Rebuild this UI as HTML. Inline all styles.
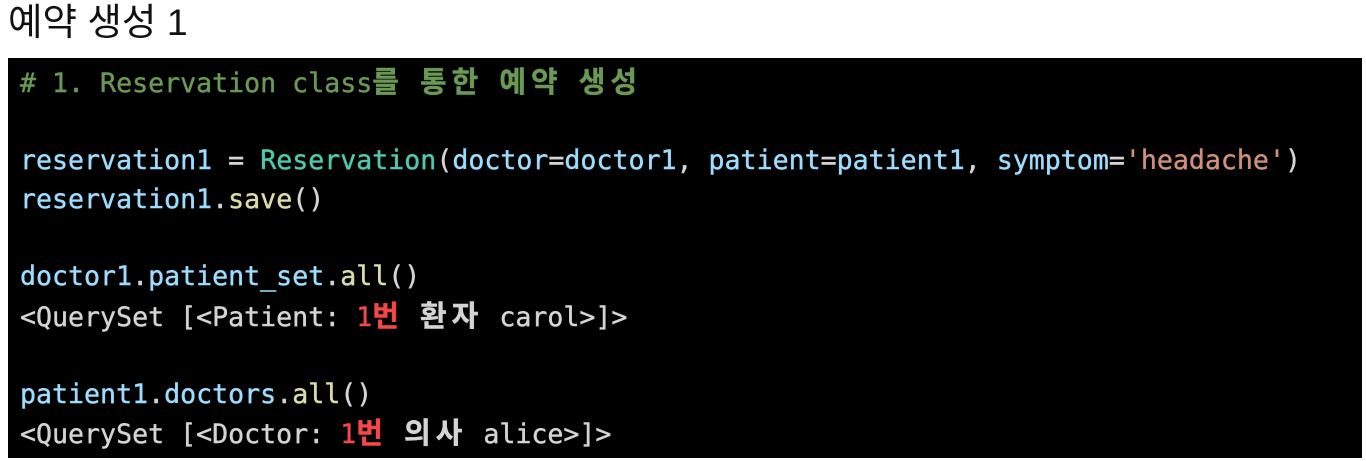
<!DOCTYPE html>
<html><head><meta charset="utf-8"><style>
body{margin:0;background:#fff;width:1366px;height:461px;overflow:hidden;}
.t{position:absolute;left:8px;top:0px;font:37.5px "Liberation Sans","Noto Sans CJK KR",sans-serif;color:#111;line-height:44px;}
.box{position:absolute;left:8px;top:58px;width:1354px;height:400px;background:#000;}
pre{margin:0;position:absolute;left:12px;top:5px;font:26.6px/38.6px "DejaVu Sans Mono","Noto Sans CJK KR",monospace;color:#d4d4d4;-webkit-text-stroke:0.4px currentColor;}
.c{color:#6a9955}.v{color:#9cdcfe}.k{color:#4ec9b0}.f{color:#dcdcaa}.s{color:#ce9178}.r{color:#f44747}
.h{font-size:29px;letter-spacing:5px;font-weight:bold}
</style></head><body>
<div class="t">예약 생성 1</div>
<div class="box"><pre><span class="c"># 1. Reservation class<span class="h">를</span> <span class="h">통한</span> <span class="h">예약</span> <span class="h">생성</span></span>

<span class="v">reservation1</span> = <span class="k">Reservation</span>(<span class="v">doctor</span>=<span class="v">doctor1</span>, <span class="v">patient</span>=<span class="v">patient1</span>, <span class="v">symptom</span>=<span class="s">'headache'</span>)
<span class="v">reservation1</span>.<span class="f">save</span>()

<span class="v">doctor1</span>.<span class="v">patient_set</span>.<span class="f">all</span>()
&lt;QuerySet [&lt;Patient: <span class="r">1<span class="h">번</span></span> <span class="h">환자</span> carol&gt;]&gt;

<span class="v">patient1</span>.<span class="v">doctors</span>.<span class="f">all</span>()
&lt;QuerySet [&lt;Doctor: <span class="r">1<span class="h">번</span></span> <span class="h">의사</span> alice&gt;]&gt;</pre></div>
</body></html>
